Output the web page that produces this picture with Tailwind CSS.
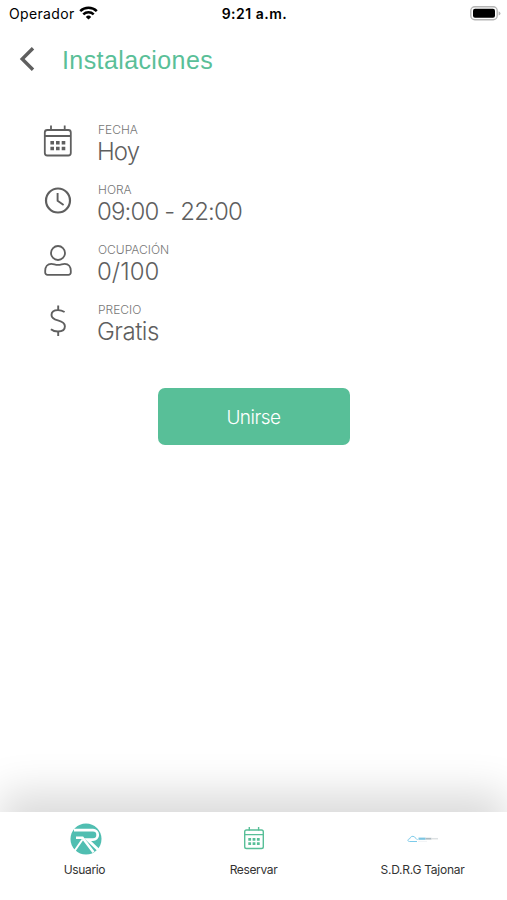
<!DOCTYPE html>
<html lang="es">
<head>
    <meta charset="UTF-8">
    <meta name="viewport" content="width=device-width, initial-scale=1.0">
    <title>Instalaciones</title>
    <script src="https://cdn.jsdelivr.net/npm/@tailwindcss/browser@4"></script>
</head>
<body class="bg-white font-['Inter','Liberation_Sans',sans-serif]">
    <div class="flex flex-col h-[900px] w-full overflow-hidden">
        <!-- Status bar -->
        <div class="grid grid-cols-3 items-center h-7 pl-[9px] pr-[6px] text-black">
            <div class="flex items-center gap-1">
                <span class="text-[14px] leading-5 tracking-[0.35px]">Operador</span>
                <svg class="w-[19px] h-[14px] mb-0.5" viewBox="0 0 19 14" fill="none" stroke="currentColor" stroke-width="2.5">
                    <path d="M1.2 5.2a11.8 11.8 0 0 1 16.6 0"/>
                    <path d="M4.3 8.3a7.4 7.4 0 0 1 10.4 0"/>
                    <path d="M9.5 13.6 6.8 10.9a3.9 3.9 0 0 1 5.4 0z" fill="currentColor" stroke="none"/>
                </svg>
            </div>
            <span class="-ml-px text-center text-[14px] leading-5 font-semibold tracking-[0.5px]">9:21 a.m.</span>
            <svg class="w-[31px] h-[15px] mb-0.5 justify-self-end" viewBox="0 0 31 15">
                <rect x="0.8" y="0.8" width="26.4" height="13" rx="4" fill="white" stroke="#b5b5b5" stroke-width="1.4"/>
                <rect x="3" y="2.8" width="22" height="9" rx="2" fill="black"/>
                <path d="M28.6 5.2q1.9.7 1.9 2.2t-1.9 2.2z" fill="#b5b5b5"/>
            </svg>
        </div>

        <!-- Header -->
        <header class="flex items-center h-16 pl-[19px]">
            <button class="w-4 h-6 mb-0.5">
                <svg class="w-4 h-6" viewBox="0 0 16 24" fill="none" stroke="#5f5f5f" stroke-width="3.4">
                    <path d="M14 1.2 3.2 12 14 22.8"/>
                </svg>
            </button>
            <h1 class="ml-[27px] text-[25px] leading-8 tracking-[0.4px] text-[#5abf98] font-['Liberation_Sans',sans-serif]">Instalaciones</h1>
        </header>

        <!-- Details -->
        <main class="flex-1 pt-[30px]">
            <ul class="pl-[43px] text-[#5f5f5f]">
                <li class="flex h-[60px]">
                    <svg class="w-[30px] h-[34px] mt-[2px]" viewBox="0 0 30 34" fill="none" stroke="currentColor" stroke-width="1.8">
                        <rect x="1.8" y="6" width="26" height="25.5" rx="2.5"/>
                        <path d="M1.8 12h26M8 1.5v4.5M21.7 1.5v4.5"/>
                        <path d="M7.4 18.8h3.6M13 18.8h3.6M18.7 18.8h3.6M7.4 24.5h3.6M13 24.5h3.6M18.7 24.5h3.6" stroke-width="3.6"/>
                    </svg>
                    <div class="ml-[25px]">
                        <p class="text-[12px] leading-4 font-light text-[#777777]">FECHA</p>
                        <p class="-ml-px text-[24px] leading-[27px] font-light tracking-[-0.9px]">Hoy</p>
                    </div>
                </li>
                <li class="flex h-[60px]">
                    <svg class="w-[30px] h-[34px] mt-[2px]" viewBox="0 0 30 34" fill="none" stroke="currentColor" stroke-width="2.2">
                        <circle cx="15" cy="16.5" r="12"/>
                        <path d="M14.6 9v7.8l6 4.2" stroke-width="1.9"/>
                    </svg>
                    <div class="ml-[25px]">
                        <p class="text-[12px] leading-4 font-light text-[#777777]">HORA</p>
                        <p class="-ml-px text-[24px] leading-[27px] font-light tracking-[-0.85px]">09:00 - 22:00</p>
                    </div>
                </li>
                <li class="flex h-[60px]">
                    <svg class="w-[30px] h-[34px] mt-[2px]" viewBox="0 0 30 34" fill="none" stroke="currentColor" stroke-width="1.8">
                        <circle cx="15" cy="9" r="7"/>
                        <path d="M8.3 19.8c2.6 0 3.6 1.1 6.7 1.1s4.1-1.1 6.7-1.1c3.9 0 6.1 3 6.1 7v1.7a2.3 2.3 0 0 1-2.3 2.3h-21a2.3 2.3 0 0 1-2.3-2.3v-1.7c0-4 2.2-7 6.1-7z"/>
                    </svg>
                    <div class="ml-[25px]">
                        <p class="text-[12px] leading-4 font-light text-[#777777]">OCUPACIÓN</p>
                        <p class="-ml-px text-[24px] leading-[27px] font-light">0/100</p>
                    </div>
                </li>
                <li class="flex h-[60px]">
                    <svg class="w-[30px] h-[34px] mt-[2px]" viewBox="0 0 30 34" fill="none" stroke="currentColor" stroke-width="1.9">
                        <path d="M15.2 1.5v4.5M15.2 27.5v4.5"/>
                        <path d="M21.6 8c-2-1.2-4-1.9-6.6-1.9-4 0-6.5 1.9-6.5 4.8 0 3.2 2.6 4.4 6.4 5.4 4.2 1.1 7 2.5 7 5.9 0 3.4-2.9 5.3-7 5.3-2.7 0-5.1-.8-7-2.3"/>
                    </svg>
                    <div class="ml-[25px]">
                        <p class="text-[12px] leading-4 font-light text-[#777777]">PRECIO</p>
                        <p class="-ml-px text-[24px] leading-[27px] font-light tracking-[-0.5px]">Gratis</p>
                    </div>
                </li>
            </ul>

            <button class="block w-[192px] h-[57px] mt-[26px] pt-1 mx-auto rounded-[7px] bg-[#58bf98] text-white text-[19px] font-light tracking-[-0.5px]">Unirse</button>
        </main>

        <!-- Bottom navigation -->
        <nav class="grid grid-cols-3 h-[88px] bg-white text-[12px] leading-4 text-[#333333] tracking-[-0.35px] shadow-[0_-20px_40px_rgba(0,0,0,0.145)]">
            <a href="#" class="flex flex-col items-center pt-[11px]">
                <svg class="w-8 h-8 ml-0.5" viewBox="0 0 32 32">
                    <circle cx="16" cy="16" r="15.5" fill="#50beb1"/>
                    <g fill="none" stroke="white">
                        <path d="M4 7.2h19a4.7 4.7 0 0 1 0 9.400h-5.500l11.500 11" stroke-width="2.8"/>
                        <path d="M6 14.800h6.500l11 14.500" stroke-width="2.6"/>
                        <path d="M12.500 16.500 4.500 28" stroke-width="2"/>
                    </g>
                </svg>
                <span class="mt-[7px]">Usuario</span>
            </a>
            <a href="#" class="flex flex-col items-center pt-[11px]">
                <svg class="w-8 h-8" viewBox="0 0 32 32" fill="none" stroke="#58bf98" stroke-width="1.4">
                    <rect x="6.7" y="7" width="18.6" height="18.5" rx="1.8"/>
                    <path d="M6.7 11.6h18.6M11.3 3.9v3.5M20.6 3.9v3.5"/>
                    <path d="M10.3 16.3h2.8M14.6 16.3h2.8M18.9 16.3h2.8M10.3 20.7h2.8M14.6 20.7h2.8M18.9 20.7h2.8" stroke-width="2.7"/>
                </svg>
                <span class="mt-[7px]">Reservar</span>
            </a>
            <a href="#" class="flex flex-col items-center pt-[11px]">
                <svg class="w-8 h-8" viewBox="0 0 32 32" fill="none">
                    <path d="M10 18.5H2.5c-2.2 0-2-2.3 0-2.6 1.2-2.6 3.2-3.3 4.8-2 1.5 1 2.2 2.1 3.2 3" stroke="#7ccbea"/>
                    <path d="M11.5 15.7h7" stroke="#7cc5e2" stroke-width="2.2"/>
                    <path d="M18.5 15.7h6" stroke="#aebbc1" stroke-width="1.8"/>
                    <path d="M24.5 15.7h6.5" stroke="#dde1e3" stroke-width="1.5"/>
                    <path d="M11 18.4h9" stroke="#e6eaec" stroke-width="0.6"/>
                </svg>
                <span class="mt-[7px] tracking-[-0.25px]">S.D.R.G Tajonar</span>
            </a>
        </nav>
    </div>
</body>
</html>
